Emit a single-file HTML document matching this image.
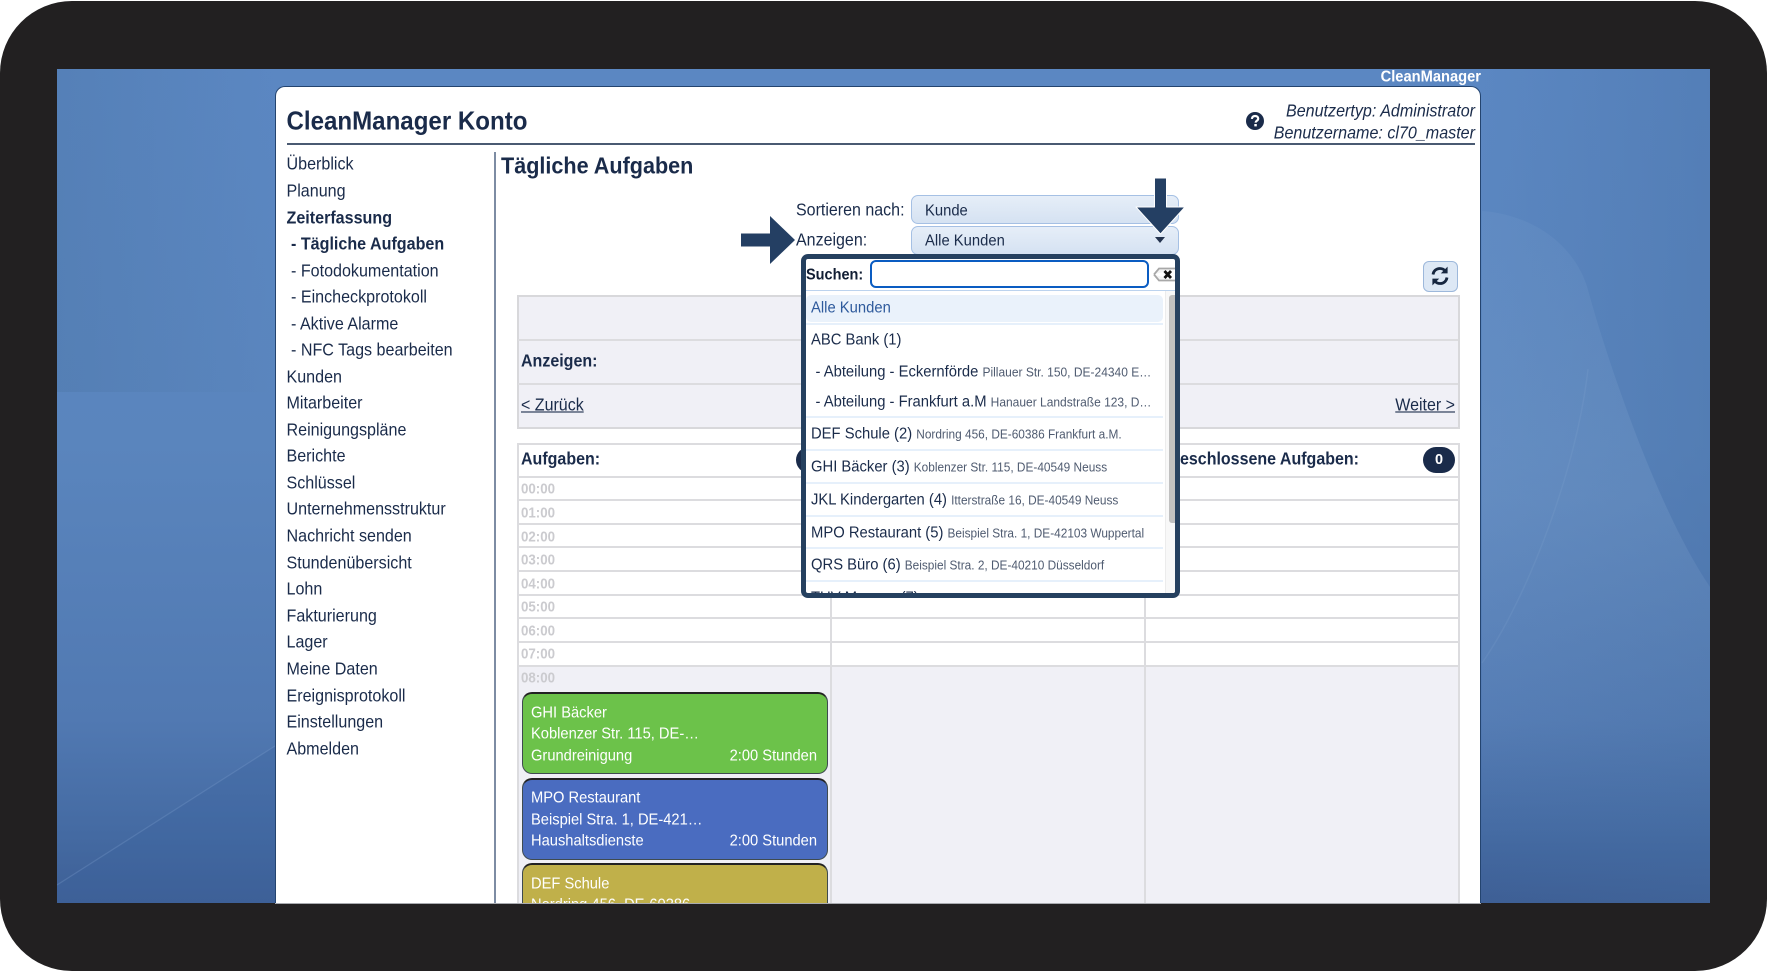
<!DOCTYPE html>
<html lang="de"><head><meta charset="utf-8"><title>CleanManager Konto</title>
<style>
html,body{margin:0;padding:0;background:#fff}
#s{position:relative;width:1767px;height:971px;overflow:hidden;font-family:"Liberation Sans",Arial,sans-serif;color:#1a2b4a;background:#fff}
#frame{position:absolute;left:0;top:1px;width:1767px;height:970px;background:#222021;border-radius:72px}
#bg{position:absolute;left:57px;top:69px;width:1653px;height:834px;overflow:hidden}
.t{position:absolute;white-space:nowrap;line-height:20px;height:20px;transform:scaleY(1.09)}
.b{font-weight:bold}
.a{position:absolute;background:#dcdcdf}
.sel{position:absolute;left:911px;width:266px;height:27px;border:1px solid #a5c0e4;border-radius:7px;background:linear-gradient(#e6eef8,#d5e2f2)}
.row{position:absolute;left:518px;width:940px;height:2px;background:#dcdcdf}
.tm{position:absolute;left:521px;font:bold 13.3px/20px "Liberation Sans",Arial,sans-serif;color:#cbcbcf;transform:scaleY(1.09)}
.card{position:absolute;left:522px;width:306px;border:1px solid #3f4b50;border-top:2px solid #222;border-radius:10px;box-sizing:border-box;color:#fff}
.card .t{font-size:14.7px;color:#fff}
.dd{position:absolute;left:801px;top:254px;width:379px;height:344px;box-sizing:border-box;border:5px solid #25405f;border-radius:7px;background:#fff;overflow:hidden}
.dd .t{font-size:14.8px;color:#1a2b4a}
.dd small{font-size:11.85px;color:#4f5b70}
.sep{position:absolute;left:0;width:357px;height:2px;background:#e6f0fb}
</style></head><body>
<div id="s">
<div id="frame"></div>
<div id="bg">
<svg width="1653" height="834" viewBox="0 0 1653 834">
<defs>
<linearGradient id="g" x1="0" y1="0" x2="0" y2="1"><stop offset="0" stop-color="#5b87c2"/><stop offset=".45" stop-color="#5a85bd"/><stop offset=".78" stop-color="#5179b2"/><stop offset=".92" stop-color="#446aa2"/><stop offset="1" stop-color="#3e5f95"/></linearGradient>
<linearGradient id="h" x1="0" y1="0" x2="1" y2="0"><stop offset="0" stop-color="#47709f" stop-opacity=".3"/><stop offset="1" stop-color="#47709f" stop-opacity="0"/></linearGradient>
<linearGradient id="l" x1="0" y1="0" x2="0" y2="1"><stop offset="0" stop-color="#a9c6e6" stop-opacity=".07"/><stop offset=".45" stop-color="#a9c6e6" stop-opacity=".14"/><stop offset="1" stop-color="#a9c6e6" stop-opacity="0"/></linearGradient>
<linearGradient id="r" x1="0" y1="0" x2="1" y2="0"><stop offset="0" stop-color="#436b9f" stop-opacity="0"/><stop offset="1" stop-color="#436b9f" stop-opacity=".3"/></linearGradient>
</defs>
<rect width="1653" height="834" fill="url(#g)"/>
<rect width="218" height="323" fill="url(#h)"/>
<rect x="1424" width="229" height="834" fill="url(#r)"/>
<path d="M1425 142C1480 146 1520 180 1531 221C1550 290 1600 440 1653 518V780H1425Z" fill="url(#l)"/>
<path d="M1425 594C1470 530 1520 400 1531 300" stroke="#a9c6e6" stroke-width="1.5" opacity=".1" fill="none"/>
<path d="M0 816L218 677V834H0Z" fill="#3a659f" opacity=".3"/>
<path d="M0 816L218 677" stroke="#7ea0cc" stroke-width="1.2" opacity=".3" fill="none"/>
</svg>
</div>
<div class="t b" style="right:286px;top:67px;font-size:14.7px;color:#fff">CleanManager</div>
<div style="position:absolute;left:275px;top:86px;width:1206px;height:817px;box-sizing:border-box;background:#fff;border:1px solid #24446f;border-bottom:0;border-radius:10px 10px 0 0"></div>

<div class="t b" style="left:286.5px;top:111px;font-size:24.1px;line-height:22px;height:22px">CleanManager Konto</div>
<div style="position:absolute;left:287px;top:143px;width:1188px;height:2px;background:#4a5a72"></div>
<svg style="position:absolute;left:1246px;top:112px" width="18" height="18" viewBox="0 0 18 18"><circle cx="9" cy="9" r="9" fill="#1a2b4a"/><path d="M5.9 6.9C6 5 7.3 4 9.1 4C11 4 12.2 5.1 12.2 6.6C12.2 8.7 9.6 8.8 9.6 10.6" fill="none" stroke="#fff" stroke-width="2.2"/><rect x="8.3" y="12" width="2.5" height="2.4" fill="#fff"/></svg>
<div class="t" style="right:292px;top:101px;font-size:16.1px;font-style:italic">Benutzertyp: Administrator</div>
<div class="t" style="right:292px;top:123px;font-size:16.1px;font-style:italic">Benutzername: cl70_master</div>

<div style="position:absolute;left:494px;top:152px;width:2px;height:751px;background:#7d8ca3"></div>

<div style="font-size:16.1px">
<div class="t" style="left:286.5px;top:154px">Überblick</div>
<div class="t" style="left:286.5px;top:181px">Planung</div>
<div class="t b" style="left:286.5px;top:208px">Zeiterfassung</div>
<div class="t b" style="left:291px;top:234px">- Tägliche Aufgaben</div>
<div class="t" style="left:291px;top:261px">- Fotodokumentation</div>
<div class="t" style="left:291px;top:287px">- Eincheckprotokoll</div>
<div class="t" style="left:291px;top:314px">- Aktive Alarme</div>
<div class="t" style="left:291px;top:340px">- NFC Tags bearbeiten</div>
<div class="t" style="left:286.5px;top:367px">Kunden</div>
<div class="t" style="left:286.5px;top:393px">Mitarbeiter</div>
<div class="t" style="left:286.5px;top:420px">Reinigungspläne</div>
<div class="t" style="left:286.5px;top:446px">Berichte</div>
<div class="t" style="left:286.5px;top:473px">Schlüssel</div>
<div class="t" style="left:286.5px;top:499px">Unternehmensstruktur</div>
<div class="t" style="left:286.5px;top:526px">Nachricht senden</div>
<div class="t" style="left:286.5px;top:553px">Stundenübersicht</div>
<div class="t" style="left:286.5px;top:579px">Lohn</div>
<div class="t" style="left:286.5px;top:606px">Fakturierung</div>
<div class="t" style="left:286.5px;top:632px">Lager</div>
<div class="t" style="left:286.5px;top:659px">Meine Daten</div>
<div class="t" style="left:286.5px;top:686px">Ereignisprotokoll</div>
<div class="t" style="left:286.5px;top:712px">Einstellungen</div>
<div class="t" style="left:286.5px;top:739px">Abmelden</div>
</div>

<div class="t b" style="left:501px;top:156px;font-size:21.6px">Tägliche Aufgaben</div>

<div class="t" style="left:796px;top:200.5px;font-size:16px">Sortieren nach:</div>
<div class="t" style="left:796px;top:230.5px;font-size:16px">Anzeigen:</div>
<div class="sel" style="top:195px"></div>
<div class="sel" style="top:226px"></div>
<div class="t" style="left:925px;top:200.5px;font-size:14.8px">Kunde</div>
<div class="t" style="left:925px;top:230.5px;font-size:14.8px">Alle Kunden</div>
<svg style="position:absolute;left:1154px;top:236px" width="12" height="8"><path d="M1 1H11L6 7Z" fill="#24344f"/></svg>

<div style="position:absolute;left:1423px;top:261px;width:33px;height:29px;border:1px solid #9db8db;border-radius:6px;background:#dde8f5"></div>
<svg style="position:absolute;left:1430px;top:265px" width="20" height="22" viewBox="0 0 20 22"><path d="M3 9.5C3.6 5.8 6.4 3.5 9.9 3.5C12.2 3.5 14.1 4.5 15.3 6" fill="none" stroke="#16263f" stroke-width="2.8"/><path d="M17.6 1.6V8.4H10.8Z" fill="#16263f"/><path d="M17 12.5C16.4 16.2 13.6 18.5 10.1 18.5C7.8 18.5 5.9 17.5 4.7 16" fill="none" stroke="#16263f" stroke-width="2.8"/><path d="M2.4 20.4V13.6H9.2Z" fill="#16263f"/></svg>

<div style="position:absolute;left:517px;top:295px;width:943px;height:134px;box-sizing:border-box;background:#f0f0f6;border:2px solid #d8d8db"></div>
<div class="row" style="top:339px"></div>
<div class="row" style="top:383px"></div>
<div class="t b" style="left:521px;top:352px;font-size:16px">Anzeigen:</div>
<div class="t" style="left:521px;top:396px;font-size:16px;text-decoration:underline">&lt; Zurück</div>
<div class="t" style="right:312px;top:396px;font-size:16px;text-decoration:underline">Weiter &gt;</div>

<div style="position:absolute;left:517px;top:443px;width:943px;height:460px;box-sizing:border-box;background:#fff;border:2px solid #dcdcdf;border-bottom:0"></div>
<div style="position:absolute;left:519px;top:667px;width:939px;height:236px;background:#f0f0f6"></div>
<div class="row" style="top:476px"></div><div class="row" style="top:499px"></div><div class="row" style="top:523px"></div><div class="row" style="top:546px"></div><div class="row" style="top:570px"></div><div class="row" style="top:594px"></div><div class="row" style="top:617px"></div><div class="row" style="top:641px"></div><div class="row" style="top:665px"></div>
<div class="a" style="left:830px;top:443px;width:2px;height:460px"></div>
<div class="a" style="left:1144px;top:443px;width:2px;height:460px"></div>
<div style="position:absolute;left:275px;top:903px;width:1206px;height:1px;background:#a9abb0"></div>

<div class="t b" style="left:521px;top:450px;font-size:16px">Aufgaben:</div>
<div style="position:absolute;left:796px;top:447px;width:32px;height:26px;border-radius:13px;background:#1a2b4a"></div>
<div class="t b" style="right:408px;top:450px;font-size:16px">Abgeschlossene Aufgaben:</div>
<div style="position:absolute;left:1423px;top:447px;width:32px;height:26px;border-radius:13px;background:#1a2b4a;color:#fff;font:bold 14.5px/26px 'Liberation Sans',Arial,sans-serif;text-align:center">0</div>

<div class="tm" style="top:479px">00:00</div><div class="tm" style="top:503px">01:00</div><div class="tm" style="top:527px">02:00</div><div class="tm" style="top:550px">03:00</div><div class="tm" style="top:574px">04:00</div><div class="tm" style="top:597px">05:00</div><div class="tm" style="top:621px">06:00</div><div class="tm" style="top:644px">07:00</div><div class="tm" style="top:668px">08:00</div>

<div class="card" style="top:692px;height:82px;background:#6cc24a">
<div class="t" style="left:8px;top:8.5px">GHI Bäcker</div>
<div class="t" style="left:8px;top:30px">Koblenzer Str. 115, DE-…</div>
<div class="t" style="left:8px;top:52px">Grundreinigung</div>
<div class="t" style="right:10px;top:52px">2:00 Stunden</div>
</div>
<div class="card" style="top:778px;height:82px;background:#4a6cc0">
<div class="t" style="left:8px;top:8px">MPO Restaurant</div>
<div class="t" style="left:8px;top:30px">Beispiel Stra. 1, DE-421…</div>
<div class="t" style="left:8px;top:51px">Haushaltsdienste</div>
<div class="t" style="right:10px;top:51px">2:00 Stunden</div>
</div>
<div style="position:absolute;left:0;top:0;width:1767px;height:903px;overflow:hidden;pointer-events:none">
<div class="card" style="top:863px;height:82px;background:#c0b04a">
<div class="t" style="left:8px;top:9px">DEF Schule</div>
<div class="t" style="left:8px;top:30px">Nordring 456, DE-60386…</div>
</div>
</div>

<div class="dd">
<div class="t b" style="left:0;top:6px;font-size:14.5px;color:#111d33">Suchen:</div>
<div style="position:absolute;left:64px;top:1px;width:279px;height:28px;box-sizing:border-box;border:2px solid #0a5cc2;border-radius:6px;background:#fff"></div>
<svg style="position:absolute;left:347px;top:8px" width="22" height="15" viewBox="0 0 22 15"><path d="M1 7.5L6 1.5H22M22 13.5H6L1 7.5" fill="#f4f4f4" stroke="#a8a8a8" stroke-width="1.8"/><path d="M11.5 4L18 11M18 4L11.5 11" stroke="#111" stroke-width="2.8"/></svg>
<div style="position:absolute;left:0;top:31px;width:369px;height:1px;background:#bcd3ee"></div>
<div style="position:absolute;left:0;top:36px;width:357px;height:27px;border-radius:5px;background:#eaf2fb"></div>
<div class="t" style="left:5px;top:39px;color:#2e5a9c">Alle Kunden</div>
<div class="sep" style="top:64px"></div>
<div class="t" style="left:5px;top:71px">ABC Bank (1)</div>
<div class="t" style="left:9.5px;top:102.5px">- Abteilung - Eckernförde <small style="font-size:12px">Pillauer Str. 150, DE-24340 E…</small></div>
<div class="t" style="left:9.5px;top:133px">- Abteilung - Frankfurt a.M <small style="font-size:12px">Hanauer Landstraße 123, D…</small></div>
<div class="sep" style="top:157px"></div>
<div class="t" style="left:5px;top:165px">DEF Schule (2) <small>Nordring 456, DE-60386 Frankfurt a.M.</small></div>
<div class="sep" style="top:190px"></div>
<div class="t" style="left:5px;top:198px">GHI Bäcker (3) <small>Koblenzer Str. 115, DE-40549 Neuss</small></div>
<div class="sep" style="top:223px"></div>
<div class="t" style="left:5px;top:231px">JKL Kindergarten (4) <small>Itterstraße 16, DE-40549 Neuss</small></div>
<div class="sep" style="top:256px"></div>
<div class="t" style="left:5px;top:264px">MPO Restaurant (5) <small>Beispiel Stra. 1, DE-42103 Wuppertal</small></div>
<div class="sep" style="top:288px"></div>
<div class="t" style="left:5px;top:296px">QRS Büro (6) <small>Beispiel Stra. 2, DE-40210 Düsseldorf</small></div>
<div class="sep" style="top:321px"></div>
<div class="t" style="left:5px;top:329px">TUV Messen (7) <small>Beispiel Stra. 3, DE-40211 Düsseldorf</small></div>
<div style="position:absolute;left:359px;top:32px;width:10px;height:307px;background:#f8f8f8;border-left:1px solid #ececec;box-sizing:border-box"></div>
<div style="position:absolute;left:363px;top:36px;width:6px;height:228px;background:#c0c0c0;border-radius:3px 0 0 3px"></div>
</div>

<svg style="position:absolute;left:738px;top:212px" width="60" height="54" viewBox="0 0 60 54"><path d="M3 21.5H32V4L57 28L32 52V34.5H3Z" fill="#243f63"/></svg>
<svg style="position:absolute;left:1133px;top:176px" width="55" height="61" viewBox="0 0 55 61"><path d="M21.5 2H33.5V31H52L27.5 58L3 31H21.5Z" fill="#243f63" stroke="#fff" stroke-width="1" stroke-linejoin="round"/></svg>
</div>
</body></html>
